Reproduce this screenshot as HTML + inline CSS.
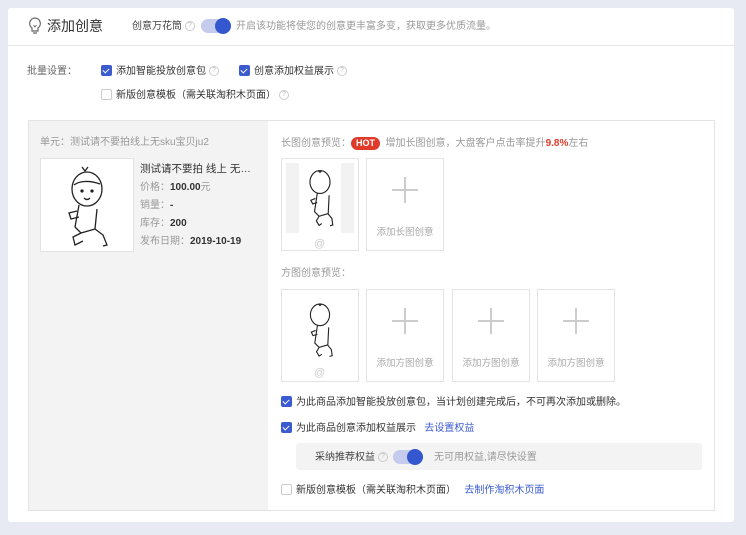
<!DOCTYPE html>
<html><head><meta charset="utf-8"><style>
*{box-sizing:border-box;margin:0;padding:0}
body{width:746px;height:535px;background:#e8eaf3;font-family:"Liberation Sans","Noto Sans CJK SC",sans-serif;font-size:10px;color:#333;position:relative;overflow:hidden}
.abs{position:absolute;line-height:15px}
.card{left:8px;top:8px;width:726px;height:514px;background:#fff;border-radius:3px}
.hdr{left:8px;top:45px;width:730px;height:1px;background:#e6e6e6}
.cb{display:inline-block;width:11px;height:11px;border-radius:2px;vertical-align:-2px;margin-right:4px}
.cb.on{background:#3b5bd1;position:relative}
.cb.on:after{content:"";position:absolute;left:3px;top:1.5px;width:3px;height:5px;border:solid #fff;border-width:0 1.5px 1.5px 0;transform:rotate(45deg)}
.cb.off{border:1px solid #ccc;background:#fff}
.q{display:inline-block;width:10px;height:10px;border:1px solid #ccc;border-radius:50%;font-size:7px;color:#bbb;text-align:center;line-height:8px;vertical-align:top;margin-top:2px;margin-left:3px}
.tog{display:inline-block;width:30px;height:14px;border-radius:7px;background:#c5cbec;position:relative;vertical-align:-3px}
.tog:after{content:"";position:absolute;right:0;top:-1px;width:16px;height:16px;border-radius:50%;background:#3456cf}
.box{border:1px solid #e3e3e3;background:#fff;width:78px;height:93px}
.plus{position:absolute;left:25px;top:18px;width:26px;height:26px}
.plus:before{content:"";position:absolute;left:12px;top:0;width:2px;height:26px;background:#ccc}
.plus:after{content:"";position:absolute;top:12px;left:0;height:2px;width:26px;background:#ccc}
.bl{position:absolute;width:100%;text-align:center;top:66px;font-size:9.5px;color:#aaa}
.g{color:#999}
a{color:#3b5bd1;text-decoration:none}
</style></head><body>
<div class="abs card"></div>
<div class="abs hdr"></div>
<svg class="abs" style="left:28px;top:17px" width="14" height="18" viewBox="0 0 14 18"><path d="M7 1a5.5 5.5 0 0 0-3 10v3h6v-3a5.5 5.5 0 0 0-3-10z M5 16h4" fill="none" stroke="#666" stroke-width="1.2"/><path d="M5.5 8l1.5 2 1.5-2" fill="none" stroke="#666" stroke-width="0.9"/></svg>
<div class="abs" style="left:47px;top:18px;font-size:14px;line-height:16px;color:#333">添加创意</div>
<div class="abs" style="left:132px;top:19px;font-size:10px;color:#444">创意万花筒<span class="q">?</span></div>
<div class="abs" style="left:201px;top:19px"><span class="tog"></span></div>
<div class="abs g" style="left:236px;top:19px;font-size:10px">开启该功能将使您的创意更丰富多变，获取更多优质流量。</div>

<div class="abs" style="left:27px;top:64px;color:#666">批量设置：</div>
<div class="abs" style="left:101px;top:64px"><span class="cb on"></span>添加智能投放创意包<span class="q">?</span></div>
<div class="abs" style="left:239px;top:64px"><span class="cb on"></span>创意添加权益展示<span class="q">?</span></div>
<div class="abs" style="left:101px;top:88px"><span class="cb off"></span>新版创意模板（需关联淘积木页面）<span class="q">?</span></div>

<div class="abs" style="left:28px;top:120px;width:687px;height:391px;border:1px solid #e3e3e3;background:#fff"></div>
<div class="abs" style="left:29px;top:121px;width:239px;height:389px;background:#f3f3f3"></div>
<div class="abs g" style="left:40px;top:135px">单元：测试请不要拍线上无sku宝贝ju2</div>
<div class="abs" style="left:40px;top:158px;width:94px;height:94px;background:#fff;border:1px solid #e3e3e3">
<svg width="92" height="92" viewBox="0 0 92 92" fill="none" stroke="#222" stroke-width="1.3"><ellipse cx="46" cy="30" rx="15" ry="17"/><path d="M33 26c5-4 15-5 26-1M41 8l3 4 3-4"/><circle cx="41" cy="32" r="1" fill="#222"/><circle cx="51" cy="32" r="1" fill="#222"/><path d="M43 39q3 3 6 0"/><path d="M38 46l-4 22 6 6 14-4 2-20M36 52l-8 2 2 6 8-2M40 74l-8 4 2 8 8-4M54 70l8 6 4 10-4 1"/></svg></div>
<div class="abs" style="left:140px;top:162px;font-size:10.5px;width:116px;white-space:nowrap;overflow:hidden;text-overflow:ellipsis">测试请不要拍 线上 无sku宝贝ju2</div>
<div class="abs" style="left:140px;top:180px"><span class="g">价格：</span><b>100.00</b><span class="g">元</span></div>
<div class="abs" style="left:140px;top:198px"><span class="g">销量：</span><b>-</b></div>
<div class="abs" style="left:140px;top:216px"><span class="g">库存：</span><b>200</b></div>
<div class="abs" style="left:140px;top:234px"><span class="g">发布日期：</span><b>2019-10-19</b></div>

<div class="abs g" style="left:281px;top:136px">长图创意预览：<span style="display:inline-block;background:#e03a2a;color:#fff;font-weight:bold;border-radius:7px;padding:0 5px;font-size:9px;line-height:13px">HOT</span>&nbsp; 增加长图创意，大盘客户点击率提升<b style="color:#e03a2a">9.8%</b>左右</div>
<div class="abs box" style="left:281px;top:158px"><div style="position:absolute;left:4px;top:4px;width:68px;height:70px;background:#f2f2f2"></div><div style="position:absolute;left:17px;top:4px;width:42px;height:70px;background:#fff"><svg width="42" height="70" viewBox="0 0 92 150" fill="none" stroke="#222" stroke-width="2.5"><ellipse cx="46" cy="40" rx="22" ry="25"/><path d="M42 15l4 4 4-4"/><path d="M40 65l-6 40 10 10 20-6 2-40M36 76l-10 4 4 8 10-3M44 115l-6 10 6 10 6-4M64 110l8 10 2 14-6 2"/></svg></div><div style="position:absolute;left:32px;top:78px;color:#ccc;font-size:11px">@</div></div>
<div class="abs box" style="left:366px;top:158px"><div class="plus"></div><div class="bl">添加长图创意</div></div>

<div class="abs g" style="left:281px;top:266px">方图创意预览：</div>
<div class="abs box" style="left:281px;top:289px"><svg style="position:absolute;left:18px;top:6px" width="40" height="68" viewBox="0 0 92 150" fill="none" stroke="#222" stroke-width="2.5"><ellipse cx="46" cy="40" rx="22" ry="25"/><path d="M42 15l4 4 4-4"/><path d="M40 65l-6 40 10 10 20-6 2-40M36 76l-10 4 4 8 10-3M44 115l-6 10 6 10 6-4M64 110l8 10 2 14-6 2"/></svg><div style="position:absolute;left:32px;top:76px;color:#ccc;font-size:11px">@</div></div>
<div class="abs box" style="left:366px;top:289px"><div class="plus"></div><div class="bl">添加方图创意</div></div>
<div class="abs box" style="left:452px;top:289px"><div class="plus"></div><div class="bl">添加方图创意</div></div>
<div class="abs box" style="left:537px;top:289px"><div class="plus"></div><div class="bl">添加方图创意</div></div>

<div class="abs" style="left:281px;top:395px"><span class="cb on"></span>为此商品添加智能投放创意包，当计划创建完成后，不可再次添加或删除。</div>
<div class="abs" style="left:281px;top:421px"><span class="cb on"></span>为此商品创意添加权益展示 &nbsp; <a>去设置权益</a></div>
<div class="abs" style="left:296px;top:443px;width:406px;height:27px;background:#f3f3f3;border-radius:3px"></div>
<div class="abs" style="left:315px;top:450px;color:#444">采纳推荐权益<span class="q">?</span></div>
<div class="abs" style="left:393px;top:450px"><span class="tog"></span></div>
<div class="abs g" style="left:434px;top:450px">无可用权益,请尽快设置</div>
<div class="abs" style="left:281px;top:483px"><span class="cb off"></span>新版创意模板（需关联淘积木页面） &nbsp; <a>去制作淘积木页面</a></div>
</body></html>
